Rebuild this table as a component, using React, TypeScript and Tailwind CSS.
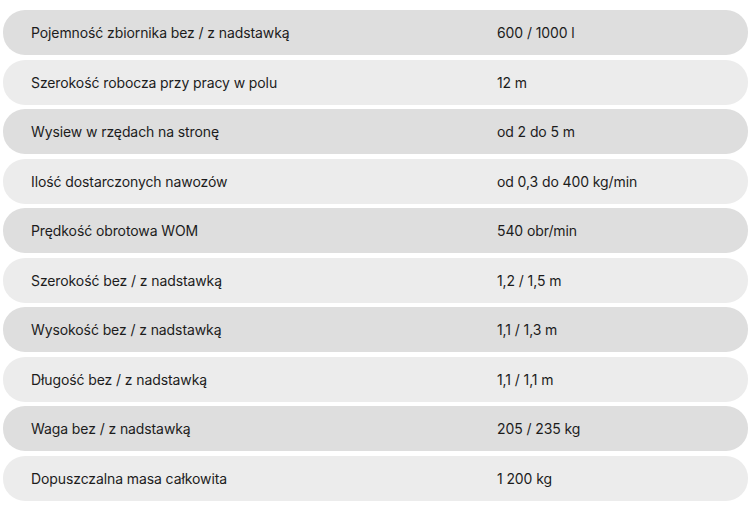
const specs = [
  ["Pojemność zbiornika bez / z nadstawką", "600 / 1000 l"],
  ["Szerokość robocza przy pracy w polu", "12 m"],
  ["Wysiew w rzędach na stronę", "od 2 do 5 m"],
  ["Ilość dostarczonych nawozów", "od 0,3 do 400 kg/min"],
  ["Prędkość obrotowa WOM", "540 obr/min"],
  ["Szerokość bez / z nadstawką", "1,2 / 1,5 m"],
  ["Wysokość bez / z nadstawką", "1,1 / 1,3 m"],
  ["Długość bez / z nadstawką", "1,1 / 1,1 m"],
  ["Waga bez / z nadstawką", "205 / 235 kg"],
  ["Dopuszczalna masa całkowita", "1 200 kg"],
];

export default function App() {
  return (
    <div className="w-[751px] h-[510px] bg-white pt-[10px] px-[3px] font-['Inter',sans-serif] text-[14px] text-[#1c1c1c] tracking-[-0.1px]">
      <div className="flex flex-col gap-[4.5px]">
        {specs.map(([label, value], i) => (
          <div
            key={label}
            className={`flex items-center h-[45px] rounded-[22px] pl-[28px] ${
              i % 2 === 0 ? "bg-[#dedede]" : "bg-[#ececec]"
            }`}
          >
            <span className="w-[466px]">{label}</span>
            <span>{value}</span>
          </div>
        ))}
      </div>
    </div>
  );
}
